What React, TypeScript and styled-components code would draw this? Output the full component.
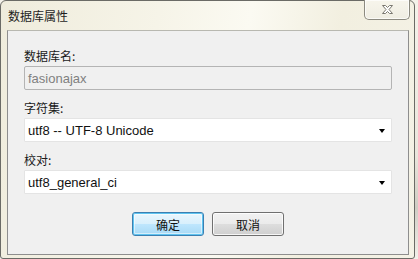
import styled, {createGlobalStyle} from "styled-components";

const GlobalStyle = createGlobalStyle`
    html, body {
        margin: 0;
        padding: 0;
        width: 418px;
        height: 259px;
        overflow: hidden;
        background: linear-gradient(180deg, #f4f2ea 0%, #e9e6dc 60%, #cfcdc4 80%, #f2f0ea 100%);
    }
`;

const Window = styled.div`
    box-sizing: border-box;
    width: 415px;
    height: 259px;
    display: flex;
    flex-direction: column;
    border: 1px solid #6b6b66;
    border-radius: 6px 6px 3px 3px;
    background: linear-gradient(100deg, #efecdc 0%, #f6f4e8 35%, #fbfaf2 55%, #f2efe0 75%, #f4f2e6 100%);
    padding: 0 5px 3px 6px;
    font-family: "Liberation Sans", "Noto Sans CJK SC", sans-serif;
`;

const TitleBar = styled.div`
    height: 29px;
    display: flex;
    align-items: flex-start;
    justify-content: space-between;
`;

const Title = styled.div`
    font-family: "Noto Sans CJK SC", sans-serif;
    font-size: 12px;
    line-height: 14px;
    color: #1e1e1e;
    padding: 8px 0 0 1px;
`;

const CloseButton = styled.div`
    box-sizing: border-box;
    width: 46px;
    height: 20px;
    margin-top: -1px;
    margin-right: -1px;
    border: 1px solid #8c8a80;
    border-top: none;
    border-radius: 0 0 5px 5px;
    background: linear-gradient(180deg, #f7f5ec 0%, #efede2 100%);
    box-shadow: inset 0 0 0 1px rgba(255, 255, 255, 0.7);
    display: flex;
    align-items: center;
    justify-content: center;
`;

const Client = styled.div`
    flex: 1;
    box-sizing: border-box;
    background: #f0f0f0;
    border: 1px solid #8e8e8e;
    border-top-color: #b8b8b0;
    padding: 16px 16px 18px 16px;
    display: flex;
    flex-direction: column;
`;

const Group = styled.div`
    display: flex;
    flex-direction: column;
    gap: 1px;
    & + & {
        margin-top: 9px;
    }
`;

const Label = styled.div`
    font-family: "Noto Sans CJK SC", sans-serif;
    font-size: 12px;
    line-height: 18px;
    color: #1a1a1a;
    height: 18px;
`;

const Field = styled.div<{ $disabled?: boolean }>`
    box-sizing: border-box;
    height: 24px;
    display: flex;
    align-items: center;
    justify-content: space-between;
    padding: 0 5px 0 3px;
    font-size: 13px;
    color: ${p => (p.$disabled ? "#808080" : "#111")};
    background: ${p => (p.$disabled ? "#f0f0f0" : "#ffffff")};
    border: 1px solid ${p => (p.$disabled ? "#b4b4b4" : "#e4e4e4")};
    border-radius: ${p => (p.$disabled ? "2px" : "1px")};
`;

const Arrow = styled.span`
    width: 0;
    height: 0;
    border-left: 3.5px solid transparent;
    border-right: 3.5px solid transparent;
    border-top: 4px solid #000;
    margin-right: 1px;
    margin-top: 1px;
`;

const ButtonRow = styled.div`
    margin-top: 18px;
    display: flex;
    justify-content: center;
    gap: 8px;
`;

const Button = styled.div<{ $default?: boolean }>`
    box-sizing: border-box;
    width: 72px;
    height: 24px;
    display: flex;
    align-items: center;
    justify-content: center;
    font-family: "Noto Sans CJK SC", sans-serif;
    font-size: 12px;
    color: #111;
    border-radius: 3px;
    border: 1px solid ${p => (p.$default ? "#3c7fb1" : "#707070")};
    background: ${p =>
        p.$default
            ? "linear-gradient(180deg, #eaf6fd 0%, #d9f0fc 48%, #bee6fd 52%, #a7d9f5 100%)"
            : "linear-gradient(180deg, #f2f2f2 0%, #ebebeb 48%, #dddddd 52%, #cfcfcf 100%)"};
    box-shadow: ${p =>
        p.$default
            ? "inset 0 0 0 1px #5fc4f0, inset 0 0 0 2px rgba(255,255,255,0.5)"
            : "inset 0 0 0 1px rgba(255,255,255,0.8)"};
`;

const CloseIcon = () => (
    <svg width="13" height="11" viewBox="0 0 13 11">
        <path
            d="M1.5 1.5 H4.5 L6.5 3.5 L8.5 1.5 H11.5 L8 5.5 L11.5 9.5 H8.5 L6.5 7.5 L4.5 9.5 H1.5 L5 5.5 Z"
            fill="#ffffff"
            stroke="#7a7870"
            strokeWidth="1"
            strokeLinejoin="round"
        />
    </svg>
);

const App = () => {
    return (
        <>
            <GlobalStyle />
            <Window>
                <TitleBar>
                    <Title>数据库属性</Title>
                    <CloseButton>
                        <CloseIcon />
                    </CloseButton>
                </TitleBar>
                <Client>
                    <Group>
                        <Label>数据库名:</Label>
                        <Field $disabled>fasionajax</Field>
                    </Group>
                    <Group>
                        <Label>字符集:</Label>
                        <Field>
                            utf8 -- UTF-8 Unicode
                            <Arrow />
                        </Field>
                    </Group>
                    <Group>
                        <Label>校对:</Label>
                        <Field>
                            utf8_general_ci
                            <Arrow />
                        </Field>
                    </Group>
                    <ButtonRow>
                        <Button $default>确定</Button>
                        <Button>取消</Button>
                    </ButtonRow>
                </Client>
            </Window>
        </>
    );
}

export default App;
